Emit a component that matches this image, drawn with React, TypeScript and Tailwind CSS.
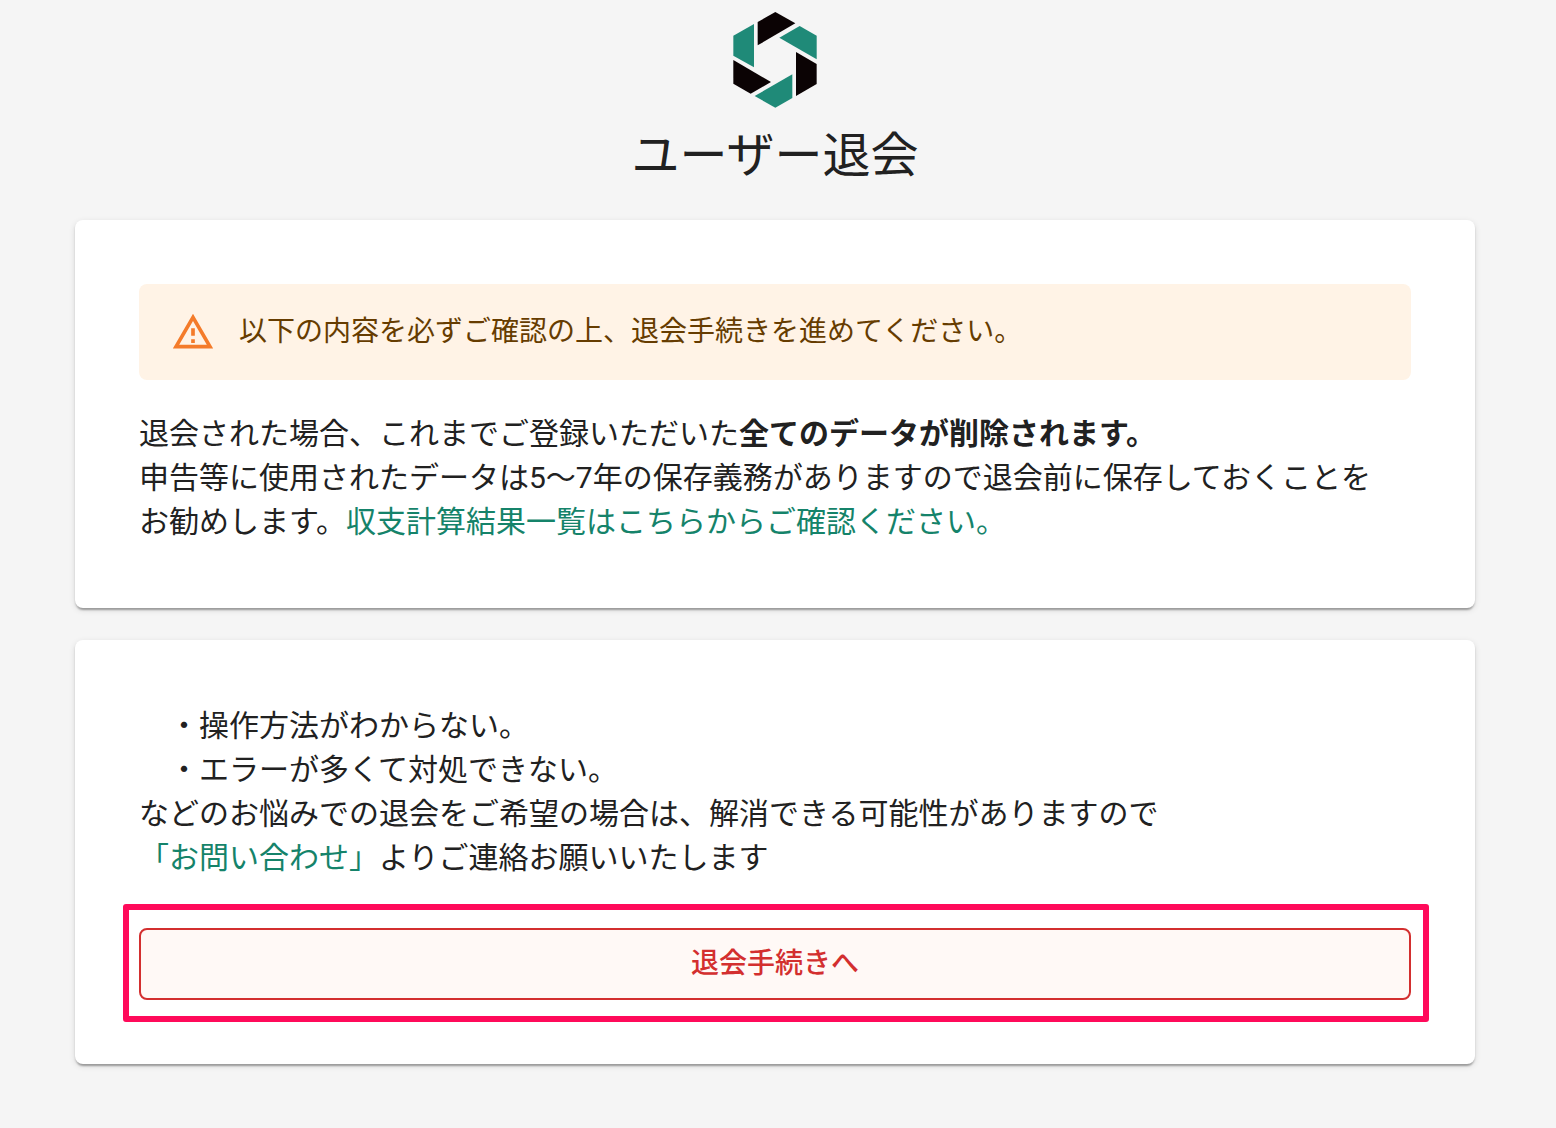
import type { ReactNode } from "react";

function Logo() {
  return (
    <svg viewBox="54 36 252 288" className="h-24 w-[84px]" role="img" aria-label="ロゴ">
      <g fill="#0b0304">
        <path d="M181 36 241 70 128 136V66Z" />
        <path d="M243 156 305 192V252L243 288Z" />
        <path d="M55 180 168 246 107 281 55 251Z" />
      </g>
      <g fill="#1f8a78">
        <path d="M117 72V202L55 167V107Z" />
        <path d="M254 78 305 107V178L193 113Z" />
        <path d="M232 223V294L181 323 119 288Z" />
      </g>
    </svg>
  );
}

function WarningIcon() {
  return (
    <svg viewBox="0 0 24 24" className="size-11 shrink-0 fill-[#f47b2a]" aria-hidden="true">
      <path d="M12 5.99L19.53 19H4.47L12 5.99M12 2L1 21h22L12 2zm1 14h-2v2h2v-2zm0-6h-2v4h2v-4z" />
    </svg>
  );
}

function Card({ children }: { children: ReactNode }) {
  return (
    <section className="rounded-lg bg-white p-16 shadow-[0_4px_2px_-2px_rgba(0,0,0,0.2),0_2px_2px_0_rgba(0,0,0,0.14),0_2px_6px_0_rgba(0,0,0,0.12)]">
      {children}
    </section>
  );
}

export default function App() {
  return (
    <div className="min-h-screen bg-[#f5f5f5] pr-1.5 font-['Roboto','Noto_Sans_CJK_JP',sans-serif] text-[#212121]">
      <main className="mx-auto flex max-w-[1400px] flex-col gap-8 pt-3 pb-16">
        <header className="flex flex-col items-center gap-4">
          <Logo />
          <h1 className="text-5xl leading-16">ユーザー退会</h1>
        </header>

        <Card>
          <div
            role="alert"
            className="flex h-24 items-center gap-6 rounded-lg bg-[#fff3e6] px-8 text-[28px] leading-10 text-[#663c00]"
          >
            <WarningIcon />
            <p>以下の内容を必ずご確認の上、退会手続きを進めてください。</p>
          </div>
          <p className="mt-8 text-3xl leading-11">
            退会された場合、これまでご登録いただいた
            <strong className="font-bold">全てのデータが削除されます。</strong>
            <br />
            申告等に使用されたデータは5〜7年の保存義務がありますので退会前に保存しておくことを
            <br />
            お勧めします。
            <a href="#results" className="text-[#15836a]">
              収支計算結果一覧はこちらからご確認ください。
            </a>
          </p>
        </Card>

        <Card>
          <p className="text-3xl leading-11">
            {"\u3000・操作方法がわからない。"}
            <br />
            {"\u3000・エラーが多くて対処できない。"}
            <br />
            などのお悩みでの退会をご希望の場合は、解消できる可能性がありますので
            <br />
            <a href="#contact" className="text-[#15836a]">
              「お問い合わせ」
            </a>
            よりご連絡お願いいたします
          </p>
          <div className="relative mt-12">
            <button
              type="button"
              className="h-18 w-full rounded-lg border-2 border-[#d32f2f] bg-[#fff9f6] text-[28px] leading-10 font-medium text-[#d32f2f]"
            >
              退会手続きへ
            </button>
            <div className="pointer-events-none absolute -top-6 -right-[18px] -bottom-[22px] -left-4 rounded-[3px] border-6 border-[#ff0a5a]" />
          </div>
        </Card>
      </main>
    </div>
  );
}
